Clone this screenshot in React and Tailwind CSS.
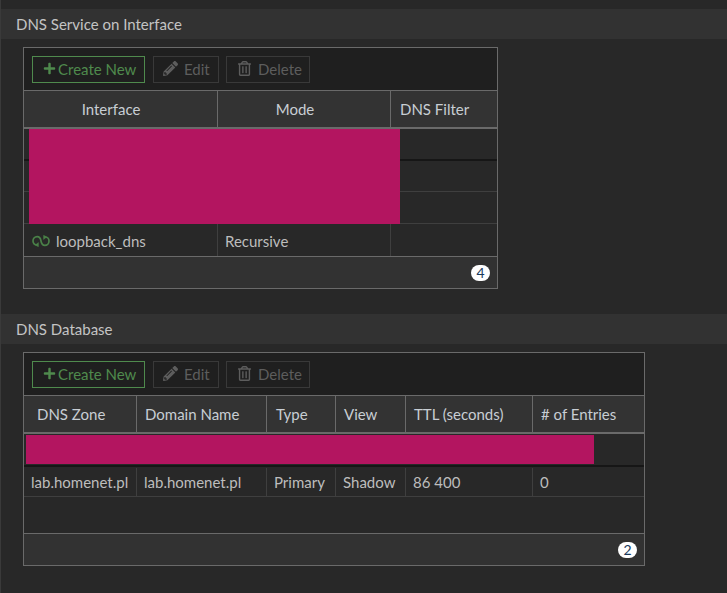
import { FaPlus, FaPencilAlt, FaRegTrashAlt } from 'react-icons/fa'

const TH = 'h-[36px] flex items-center border-r border-[#6a6a6a] last:border-r-0 text-[15px] text-[#c8ced4]'
const TD = 'flex items-center border-r border-[#3f3f3f] last:border-r-0 text-[15px] text-[#bdbdbd]'

function LinkIcon() {
  return (
    <svg width="18" height="12" viewBox="0 0 18 12" fill="none" stroke="#4a8148" strokeWidth="1.7" className="shrink-0">
      <path d="M5 10 C2.6 10 1 8.2 1 6 C1 3.6 2.8 1.6 5.2 1.6 C7.6 1.6 8.6 3.6 9 6 C9.4 8.4 10.4 10.4 12.8 10.4 C15.2 10.4 17 8.4 17 6 C17 3.8 15.4 2 13 2" />
      <path d="M6.4 7.6 L6.4 11.8 L3.4 10 Z" fill="#4a8148" strokeWidth="0.5" />
      <path d="M11.6 4.4 L11.6 0.2 L14.6 2 Z" fill="#4a8148" strokeWidth="0.5" />
    </svg>
  )
}

function SectionTitle({ children, className }) {
  return (
    <div className={`h-[30px] pl-[15px] flex items-center bg-[#323232] text-[15px] text-[#c4c4c4] ${className}`}>
      {children}
    </div>
  )
}

function Toolbar() {
  return (
    <div className="h-[43px] bg-[#1f1f1f] flex items-center pl-[8px] border-b border-[#6a6a6a]">
      <button className="h-[27px] w-[113px] border border-[#4f8a4d] flex items-center pl-[10px] text-[15px] text-[#4f8a4d]">
        <FaPlus size={13} className="shrink-0 -mt-[2px]" />
        <span className="ml-[2px]">Create New</span>
      </button>
      <button className="h-[27px] w-[66px] ml-[8px] border border-[#393939] flex items-center pl-[9px] text-[15px] text-[#5d5d5d]">
        <FaPencilAlt size={15} className="shrink-0 -mt-[2px]" />
        <span className="ml-[6px]">Edit</span>
      </button>
      <button className="h-[27px] w-[84px] ml-[7px] border border-[#393939] flex items-center pl-[10px] text-[15px] text-[#5d5d5d]">
        <FaRegTrashAlt size={15} className="shrink-0 -mt-[2px]" />
        <span className="ml-[6px]">Delete</span>
      </button>
    </div>
  )
}

function Footer({ count }) {
  return (
    <div className="h-[32px] bg-[#323232] flex items-center justify-end pr-[7px] border-t border-[#6a6a6a]">
      <span className="w-[19px] h-[16px] rounded-full bg-white flex items-center justify-center text-[14px] text-[#1a3a5c]">
        {count}
      </span>
    </div>
  )
}

export default function App() {
  return (
    <div className="w-[727px] h-[593px] overflow-hidden bg-[#282828] border-l border-[#3a3a3a] pt-[9px] font-['Lato',sans-serif]">
      <SectionTitle>DNS Service on Interface</SectionTitle>

      <div className="relative w-[475px] ml-[22px] mt-[8px] border border-[#6a6a6a]">
        <Toolbar />
        <div className="grid grid-cols-[194px_173px_1fr] bg-[#333333] border-b-2 border-[#6a6a6a]">
          <div className={`${TH} justify-center pr-[19px]`}>Interface</div>
          <div className={`${TH} justify-center pr-[18px]`}>Mode</div>
          <div className={`${TH} pl-[9px]`}>DNS Filter</div>
        </div>
        <div className="h-[32px] border-b-2 border-[#161616]" />
        <div className="h-[31px] border-b border-[#3f3f3f]" />
        <div className="h-[32px] border-b border-[#3f3f3f]" />
        <div className="h-[32px] grid grid-cols-[194px_173px_1fr]">
          <div className={`${TD} pl-[8px] pt-[2px] gap-[6px]`}>
            <LinkIcon />
            loopback_dns
          </div>
          <div className={`${TD} pl-[7px] pt-[2px]`}>Recursive</div>
          <div className={TD} />
        </div>
        <Footer count="4" />
        <div className="absolute left-[5px] top-[81px] w-[371px] h-[95px] bg-[#b31560]" />
      </div>

      <SectionTitle className="mt-[25px]">DNS Database</SectionTitle>

      <div className="relative w-[622px] ml-[22px] mt-[8px] border border-[#6a6a6a]">
        <Toolbar />
        <div className="grid grid-cols-[113px_130px_69px_70px_127px_1fr] bg-[#333333] border-b-2 border-[#6a6a6a]">
          <div className={`${TH} pl-[13px]`}>DNS Zone</div>
          <div className={`${TH} pl-[8px]`}>Domain Name</div>
          <div className={`${TH} pl-[9px]`}>Type</div>
          <div className={`${TH} pl-[8px]`}>View</div>
          <div className={`${TH} pl-[8px]`}>TTL (seconds)</div>
          <div className={`${TH} pl-[8px]`}>
            <span># of Entries</span>
          </div>
        </div>
        <div className="h-[33px] border-b-2 border-[#161616]" />
        <div className="h-[30px] pt-[1px] grid grid-cols-[113px_130px_69px_70px_127px_1fr] border-b border-[#3f3f3f]">
          <div className={`${TD} pl-[7px]`}>lab.homenet.pl</div>
          <div className={`${TD} pl-[7px]`}>lab.homenet.pl</div>
          <div className={`${TD} pl-[7px]`}>Primary</div>
          <div className={`${TD} pl-[7px]`}>Shadow</div>
          <div className={`${TD} pl-[7px]`}>86 400</div>
          <div className={`${TD} pl-[7px]`}>0</div>
        </div>
        <div className="h-[36px]" />
        <Footer count="2" />
        <div className="absolute left-[2px] top-[82px] w-[568px] h-[29px] bg-[#b31560]" />
      </div>
    </div>
  )
}
